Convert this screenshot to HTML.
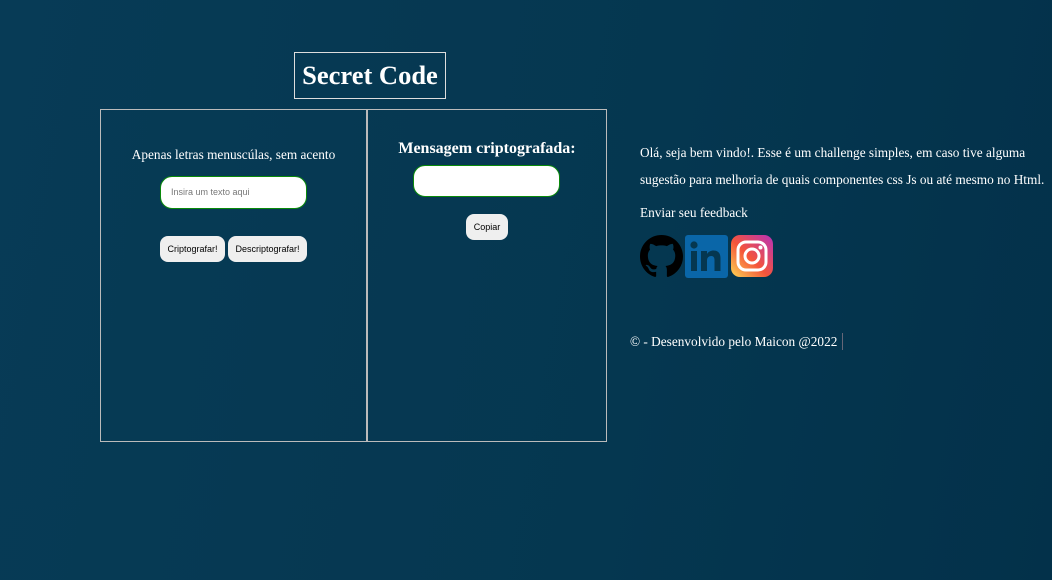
<!DOCTYPE html>
<html><head><meta charset="utf-8"><style>
*{margin:0;padding:0;box-sizing:border-box}
body{width:1052px;height:580px;overflow:hidden;background:linear-gradient(100deg,#073b56 0%,#053750 60%,#03314a 100%);font-family:"Liberation Serif",serif;color:#fff;position:relative}
.a{position:absolute}
.title{left:294px;top:52px;width:152px;height:47px;border:1px solid #ddd;font-weight:bold;font-size:26.5px;text-align:center;line-height:45px}
.panel{border:1px solid #bbb;top:109px;height:333px}
.inp{background:#fff;border:1px solid #0a8a0a;border-radius:12px}
.btn{background:#efefef;border-radius:8px;color:#000;font-family:"Liberation Sans",sans-serif;font-size:9px;text-align:center;line-height:26px;height:26px}
.t{font-size:13.3px;white-space:nowrap}
</style></head><body>
<div class="a title">Secret Code</div>
<div class="a panel" style="left:100px;width:268px"></div>
<div class="a panel" style="left:366px;width:241px"></div>
<div class="a t" style="left:100px;width:267px;text-align:center;top:147px">Apenas letras menuscúlas, sem acento</div>
<div class="a inp" style="left:160px;top:176px;width:147px;height:33px"></div>
<div class="a" style="left:171px;top:187px;font-family:'Liberation Sans',sans-serif;font-size:9px;color:#777">Insira um texto aqui</div>
<div class="a btn" style="left:160px;top:236px;width:65px">Criptografar!</div>
<div class="a btn" style="left:228px;top:236px;width:79px">Descriptografar!</div>
<div class="a" style="left:367px;width:240px;text-align:center;top:140px;font-size:16px;font-weight:bold">Mensagem criptografada:</div>
<div class="a inp" style="left:413px;top:165px;width:147px;height:32px"></div>
<div class="a btn" style="left:466px;top:214px;width:42px">Copiar</div>
<div class="a t" style="left:640px;top:145px">Olá, seja bem vindo!. Esse é um challenge simples, em caso tive alguma</div>
<div class="a t" style="left:640px;top:172px">sugestão para melhoria de quais componentes css Js ou até mesmo no Html.</div>
<div class="a t" style="left:640px;top:205px">Enviar seu feedback</div>
<svg class="a" style="left:640px;top:235px" width="43" height="43" viewBox="0 0 16 16"><path fill="#000" d="M8 0C3.58 0 0 3.58 0 8c0 3.54 2.29 6.53 5.47 7.59.4.07.55-.17.55-.38 0-.19-.01-.82-.01-1.49-2.01.37-2.53-.49-2.69-.94-.09-.23-.48-.94-.82-1.13-.28-.15-.68-.52-.01-.53.63-.01 1.08.58 1.23.82.72 1.21 1.87.87 2.33.66.07-.52.28-.87.51-1.07-1.78-.2-3.64-.89-3.64-3.95 0-.87.31-1.59.82-2.15-.08-.2-.36-1.02.08-2.12 0 0 .67-.21 2.2.82.64-.18 1.32-.27 2-.27.68 0 1.36.09 2 .27 1.53-1.04 2.2-.82 2.2-.82.44 1.1.16 1.92.08 2.12.51.56.82 1.27.82 2.15 0 3.07-1.87 3.75-3.65 3.95.29.25.54.73.54 1.48 0 1.07-.01 1.93-.01 2.2 0 .21.15.46.55.38A8.013 8.013 0 0016 8c0-4.42-3.58-8-8-8z"/></svg>
<svg class="a" style="left:685px;top:235px" width="43" height="43" viewBox="0 0 43 43"><rect width="43" height="43" rx="3" fill="#0a66a8"/><rect x="6" y="16" width="6" height="20" fill="#053750"/><circle cx="9" cy="10" r="3.6" fill="#053750"/><path d="M16 16h6v3c1.5-2.5 4-3.5 6.5-3.5 4.5 0 7 2.5 7 8V36h-6V25c0-2.5-1-4-3.200-4-2.3 0-4.3 1.5-4.3 4.5V36h-6z" fill="#053750"/></svg>
<svg class="a" style="left:731px;top:235px" width="42" height="42" viewBox="0 0 42 42"><defs><linearGradient id="g" x1="0" y1="1" x2="1" y2="0"><stop offset="0" stop-color="#fdd654"/><stop offset=".45" stop-color="#f5553a"/><stop offset="1" stop-color="#b832b8"/></linearGradient></defs><rect width="42" height="42" rx="9" fill="url(#g)"/><rect x="7" y="7" width="28" height="28" rx="8" fill="none" stroke="#fff" stroke-width="3"/><circle cx="21" cy="21" r="7" fill="none" stroke="#fff" stroke-width="3"/><circle cx="29.5" cy="12.5" r="2" fill="#fff"/></svg>
<div class="a t" style="left:630px;top:334px">© - Desenvolvido pelo Maicon @2022</div>
<div class="a" style="left:842px;top:333px;width:1px;height:17px;background:#667"></div>
</body></html>
